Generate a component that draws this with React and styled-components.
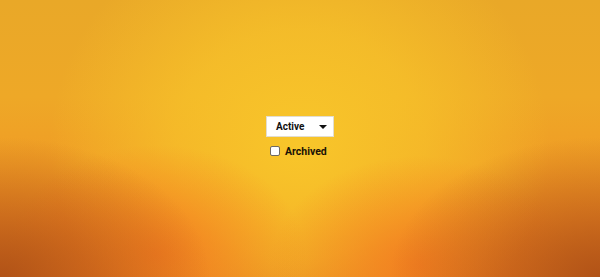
import styled, { createGlobalStyle } from "styled-components";
import { useState } from "react";

const Global = createGlobalStyle`
  html, body { margin: 0; padding: 0; }
  body { font-family: Roboto, "Liberation Sans", Arial, sans-serif; }
`;

const Page = styled.div`
  width: 100vw;
  height: 100vh;
  display: flex;
  align-items: center;
  justify-content: center;
  background:
    radial-gradient(ellipse 210px 140px at 0% 100%, rgba(172, 78, 22, 0.9) 0%, rgba(172, 78, 22, 0) 100%),
    radial-gradient(ellipse 210px 140px at 100% 100%, rgba(172, 78, 22, 0.9) 0%, rgba(172, 78, 22, 0) 100%),
    radial-gradient(ellipse 150px 110px at 26% 92%, rgba(244, 124, 32, 0.9) 0%, rgba(244, 124, 32, 0) 100%),
    radial-gradient(ellipse 150px 110px at 70% 96%, rgba(244, 124, 32, 0.9) 0%, rgba(244, 124, 32, 0) 100%),
    radial-gradient(ellipse 250px 230px at 50% 52%, #f8c62a 0%, rgba(248, 198, 42, 0.65) 50%, rgba(248, 198, 42, 0) 100%),
    linear-gradient(to bottom, #e9a828 0%, #eea827 35%, #f09c25 60%, #ee8c23 80%, #e27c20 100%);
`;

const Stack = styled.div`
  display: flex;
  flex-direction: column;
  align-items: flex-start;
  gap: 8px;
  margin-top: -4px;
`;

const SelectBox = styled.div`
  box-sizing: border-box;
  width: 68px;
  height: 21px;
  display: flex;
  align-items: center;
  justify-content: space-between;
  padding: 0 6px 0 9px;
  background: #fff;
  border: 1px solid #e2ddd0;
  font-size: 10px;
  font-weight: bold;
  color: #111;
  cursor: pointer;
`;

const Arrow = styled.span`
  width: 0;
  height: 0;
  border-left: 4px solid transparent;
  border-right: 4px solid transparent;
  border-top: 4px solid #111;
  margin-top: 1px;
`;

const CheckRow = styled.label`
  display: flex;
  align-items: center;
  gap: 5px;
  margin-left: 4px;
  font-size: 10.5px;
  font-weight: bold;
  color: #1a1206;
  cursor: pointer;
`;

const Box = styled.span`
  box-sizing: border-box;
  width: 10px;
  height: 10px;
  border: 1px solid #6f6a62;
  border-radius: 2px;
  background: ${(p) => (p.checked ? "#1a73e8" : "#fff")};
`;

const App = () => {
  const [archived, setArchived] = useState(false);
  return (
    <>
      <Global />
      <Page>
        <Stack>
          <SelectBox>
            <span>Active</span>
            <Arrow />
          </SelectBox>
          <CheckRow onClick={() => setArchived(!archived)}>
            <Box checked={archived} />
            Archived
          </CheckRow>
        </Stack>
      </Page>
    </>
  );
};

export default App;
